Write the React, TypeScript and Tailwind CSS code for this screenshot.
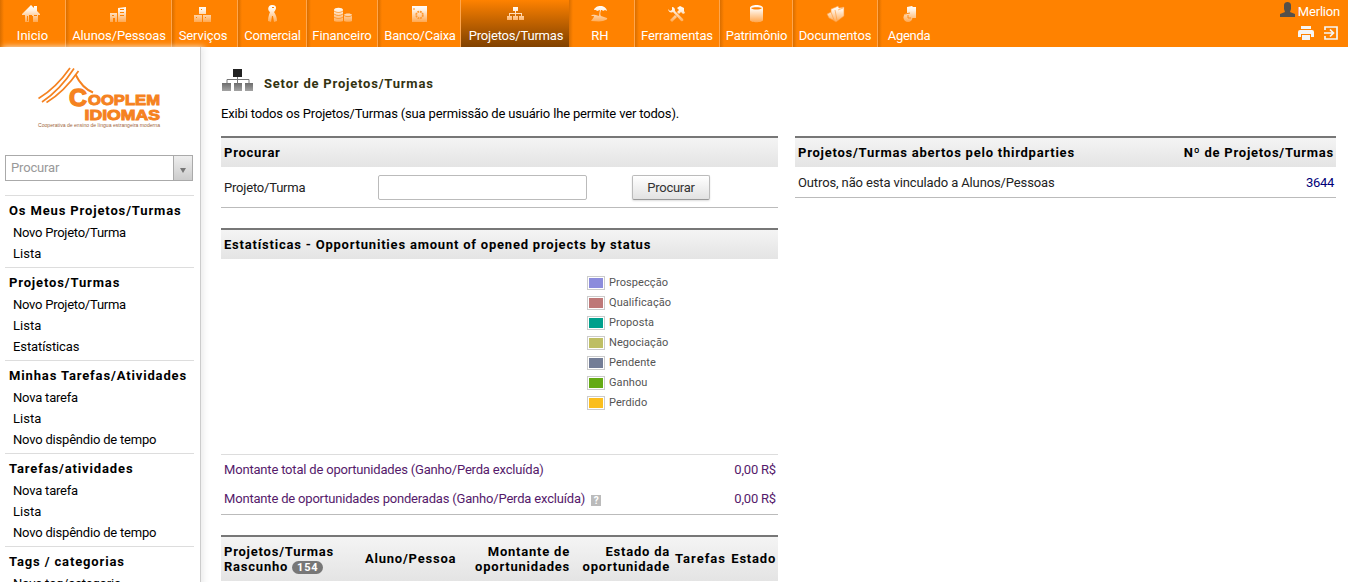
import type { ReactNode } from "react";

const FADE = "url(#fade)";

function NavGlyph({ name }: { name: string }) {
  const glyphs: Record<string, ReactNode> = {
    home: <path d="M0 9 9 0l3 3V1h3v5l3 3v1h-2v7h-5v-6h-1v-1H7v7H3V10H0zM5 11v5h1v-5zM12 10h3v1h-3z" fillRule="evenodd" />,
    building: <path d="M1 8h7v9H6v-4H4v4H1zM9 3l8-1v15H9zM11 4v1h4V4zm0 3v1h4V7zm0 3v1h4v-1zM3 10v1h2v-1z" fillRule="evenodd" />,
    boxes: <path d="M6 2h7v7H6zM1 10h8v7H1zM10 10h8v7h-8zM8 4v1h1V4zM3 12v1h1v-1zM12 12v1h1v-1z" fillRule="evenodd" />,
    person: <path d="M9 0c6 0 4 5 2 7 2 3 3 6 3 9l-3 1-1-6h-1l-1 6-3-1c0-4 1-6 2-9C4 5 5 0 9 0zm0 2v1h2V2z" fillRule="evenodd" />,
    coins: (
      <>
        <path d="M1 5c0-3 9-3 9 0v11c0 1-9 1-9 0z" />
        <path d="M11 10c0-2 8-2 8 0v6c0 1-8 1-8 0z" />
        <path d="M1 6c3 2 6 2 9 0M1 9c3 2 6 2 9 0M1 12c3 2 6 2 9 0M11 10.500c2 1.500 6 1.500 8 0" fill="none" stroke="#ff8200" strokeWidth=".7" />
      </>
    ),
    safe: (
      <>
        <path d="M2 1h15v16H2z" />
        <circle cx="9.5" cy="10" r="3.300" fill="none" stroke="#ff9830" strokeWidth="1.800" strokeDasharray="1.8 .8" />
        <path d="M3 4h2" stroke="#ff8c18" />
      </>
    ),
    tree: <path d="M7 2h5v4h-2v2h6v3h2v4h-5v-4h2V9h-5v2h2v4H7v-4h2V9H4v2h2v4H1v-4h2V8h6V6H7z" />,
    beach: <path d="M4 5c1-5 12-6 13 1l-2-1-2 1-1-1h-1c-1 3-1 5 0 6l6 2c1 2-2 2-4 3-4 1-8 0-12 0 1-2 3-3 3-5H1l1-1c4-1 6 1 7 1l1-6-3 1-1-1z" />,
    tools: <path d="M1 4c1 4 3 4 5 3l8 9c2 1 3-1 2-2L8 6c0-3-1-4-3-4v3L3 6zM10 3l3-2 4 2v3l1 2-2 1-2-2-2 2-2-2 2-2zM8 10l2 2-5 5-2-2z" />,
    cylinder: <path d="M3 3c0-4 13-4 13 0v12c0 3-13 3-13 0zm1 0c2 2 9 2 11 0-2-1-9-1-11 0z" fillRule="evenodd" />,
    folders: <path d="M1 9l4-2V4l5-2 2-1 1 2 5-1v9l-8 6-3-2-4-2zM5 7l3 8M9 5l2 10M12 5l5-2" stroke="#ff9838" strokeWidth=".6" />,
    agenda: (
      <>
        <path d="M7 2l5-1 1 1h3v11h-4L7 8z" />
        <circle cx="8" cy="12.500" r="4.500" />
        <path d="M8 10v3h3M5 9l5-1" stroke="#ff8c18" fill="none" />
      </>
    ),
  };
  return (
    <svg className="h-[18px] w-[19px] shrink-0" viewBox="0 0 19 18" fill={FADE}>
      {glyphs[name]}
    </svg>
  );
}

const nav = [
  { label: "Inicio", icon: "home", box: "w-[66px] pr-[2px]", text: "ml-[2px] tracking-[0px]" },
  { label: "Alunos/Pessoas", icon: "building", box: "w-[106px]", text: "ml-px tracking-[-0.1px]" },
  { label: "Serviços", icon: "boxes", box: "w-[66px] pr-1", text: "ml-px tracking-[-0.1px]" },
  { label: "Comercial", icon: "person", box: "w-[69px]", text: "ml-px tracking-[-0.25px]" },
  { label: "Financeiro", icon: "coins", box: "w-[71px]", text: "tracking-[-0.1px]" },
  { label: "Banco/Caixa", icon: "safe", box: "w-[83px]", text: "ml-[2px] tracking-[-0.25px]" },
  { label: "Projetos/Turmas", icon: "tree", box: "w-[108px]", text: "ml-[2px] tracking-[-0.2px]" },
  { label: "RH", icon: "beach", box: "w-[66px] pr-1", text: "ml-px tracking-[0px]" },
  { label: "Ferramentas", icon: "tools", box: "w-[85px] pr-[2px]", text: "ml-[2px] tracking-[-0.1px]" },
  { label: "Patrimônio", icon: "cylinder", box: "w-[73px]", text: "ml-px tracking-[-0.2px]" },
  { label: "Documentos", icon: "folders", box: "w-[85px]", text: "tracking-[-0.1px]" },
  { label: "Agenda", icon: "agenda", box: "w-[62px]", text: "tracking-[-0.3px]" },
];

function TopBar() {
  return (
    <header className="flex h-[47px] shrink-0 justify-between bg-[#ff8200] text-white">
      <nav className="flex">
        {nav.map((n, i) => (
          <a
            key={n.label}
            className={`flex h-[47px] shrink-0 flex-col items-center whitespace-nowrap pt-[5px] ${n.box} ${
              n.label === "Projetos/Turmas"
                ? "bg-gradient-to-b from-[#ff8200] to-[#804100]"
                : i === 11
                  ? "bg-[linear-gradient(to_right,#d96e00,#ff8200_4px)]"
                  : "border-r border-[#ffa64d] bg-[linear-gradient(to_right,#d96e00,#ff8200_4px)]"
            }`}
          >
            <NavGlyph name={n.icon} />
            <span className={`mt-[5px] leading-[15px] ${n.text}`}>{n.label}</span>
          </a>
        ))}
      </nav>
      <div className="flex flex-col items-end pr-[8px] pt-[2px]">
        <div className="flex h-[19px] items-center gap-[3px]">
          <svg className="-mt-[3px] h-4 w-[15px]" viewBox="0 0 15 16">
            <path d="M4 3c0-4 7-4 7 0v4l-1 3 5 2v3H0v-3l5-2-1-3z" fill="#55504a" />
          </svg>
          <span className="tracking-[-0.2px]">Merlion</span>
        </div>
        <div className="mr-[2px] mt-[5px] flex items-center gap-[10px]">
          <svg className="h-[14px] w-4" viewBox="0 0 16 14" fill="#f5f5f5">
            <path d="M3 0h10v3H3zM2 4h12q2 0 2 2v5h-3V8H3v3H0V6q0-2 2-2zM4 9h8v5H4z" />
          </svg>
          <svg className="h-[14px] w-[14px]" viewBox="0 0 14 14" fill="none" stroke="#f5f5f5" strokeWidth="1.7">
            <path d="M1 4V1h12v12H1v-3M0 7h9M6 3.500 9.500 7 6 10.500" />
          </svg>
        </div>
      </div>
    </header>
  );
}

function Logo() {
  return (
    <svg className="ml-[37px] h-[64px] w-[125px]" viewBox="0 0 125 64">
      <g fill="none" stroke="#f58220" strokeWidth="1.700">
        <path d="M1.500 33.500Q19 23 33 3" />
        <path d="M5 37Q23 25 37 3.500" />
        <path d="M9.500 37.500Q27 27 41.500 6" />
        <path d="M38.500 9.500Q45 23 56 27.500" strokeWidth="2" />
      </g>
      <g fill="#f58220" stroke="#f58220" className="font-['Liberation_Sans'] font-bold">
        <text x="32" y="41" fontSize="23.500" strokeWidth="1.300" textLength="18" lengthAdjust="spacingAndGlyphs">C</text>
        <text x="51" y="40" fontSize="15.500" strokeWidth="1" textLength="72" lengthAdjust="spacingAndGlyphs">OOPLEM</text>
        <text x="47.500" y="54.500" fontSize="15.500" strokeWidth="1" textLength="75.500" lengthAdjust="spacingAndGlyphs">IDIOMAS</text>
      </g>
      <text x="1" y="61.500" fontSize="5.500" fill="#a0663c" textLength="122" lengthAdjust="spacingAndGlyphs" className="font-['Liberation_Sans']">
        Cooperativa de ensino de língua estrangeira moderna
      </text>
    </svg>
  );
}

const menu = [
  { title: "Os Meus Projetos/Turmas", items: ["Novo Projeto/Turma", "Lista"] },
  { title: "Projetos/Turmas", items: ["Novo Projeto/Turma", "Lista", "Estatísticas"] },
  { title: "Minhas Tarefas/Atividades", items: ["Nova tarefa", "Lista", "Novo dispêndio de tempo"] },
  { title: "Tarefas/atividades", items: ["Nova tarefa", "Lista", "Novo dispêndio de tempo"] },
  { title: "Tags / categorias", items: ["Nova tag/categoria"] },
];

const itemTracking: Record<string, string> = {
  "Novo Projeto/Turma": "tracking-[-0.25px]",
  Lista: "tracking-[0.05px]",
  Estatísticas: "tracking-[-0.1px]",
};

function Sidebar() {
  return (
    <aside className="w-[201px] shrink-0 border-r border-[#ccc] pt-[18px] shadow-[3px_0_6px_#eee]">
      <Logo />
      <div className="ml-[5px] mt-[26px] flex h-[26px] w-[188px] border border-[#aaa] text-[#999]">
        <div className="flex-1 pl-[5px] leading-[24px] tracking-[-0.15px]">Procurar</div>
        <div className="flex w-[19px] items-center justify-center border-l border-[#aaa] bg-gradient-to-b from-[#eee] to-[#ccc]">
          <svg className="mt-1 h-[5px] w-[6px]" viewBox="0 0 6 5">
            <path d="M0 0h6L3 5z" fill="#777" />
          </svg>
        </div>
      </div>
      <div className="ml-[5px] mt-[14px] w-[189px]">
        {menu.map((m) => (
          <div key={m.title} className="whitespace-nowrap border-t border-[#ddd] pb-[3px] pt-[3px]">
            <div className="h-[23px] pl-1 font-bold leading-[23px] tracking-[0.86px]">{m.title}</div>
            {m.items.map((t) => (
              <div key={t} className={`h-[21px] pl-2 leading-[21px] ${itemTracking[t] ?? "tracking-[-0.2px]"}`}>{t}</div>
            ))}
          </div>
        ))}
      </div>
    </aside>
  );
}

const head = "border-t-2 border-[#777] bg-gradient-to-b from-[#f4f4f4] to-[#e4e4e4] font-bold whitespace-nowrap";

const legend = [
  ["Prospecção", "bg-[#8c8cdc]"],
  ["Qualificação", "bg-[#be7878]"],
  ["Proposta", "bg-[#00a08c]"],
  ["Negociação", "bg-[#bebe64]"],
  ["Pendente", "bg-[#737d96]"],
  ["Ganhou", "bg-[#64aa14]"],
  ["Perdido", "bg-[#fabe1e]"],
];

function Main() {
  return (
    <main className="flex-1 pl-5 pr-3 pt-5">
      <div className="flex h-[32px] items-center">
        <svg className="ml-px mt-[-6px] h-[23px] w-[32px]" viewBox="0 0 32 23">
          <defs>
            <linearGradient id="gray" x1="0" y1="13" x2="0" y2="23" gradientUnits="userSpaceOnUse">
              <stop stopColor="#666" />
              <stop offset="1" stopColor="#aaa" />
            </linearGradient>
          </defs>
          <path d="M11 0h9v8h-9z" fill="#222" />
          <path d="M15.500 8v6M5 14v-3.500h22V14" fill="none" stroke="#777" />
          <path d="M0 14h9v8H0zM12 14h8v8h-8zM23 14h8v8h-8z" fill="url(#gray)" />
        </svg>
        <h1 className="ml-[10px] mt-[2px] font-bold tracking-[0.8px] text-[#333311]">Setor de Projetos/Turmas</h1>
      </div>
      <p className="mt-[6px] h-[31px] leading-[17px] tracking-[-0.165px]">
        Exibi todos os Projetos/Turmas (sua permissão de usuário lhe permite ver todos).
      </p>
      <div className="flex items-start justify-between">
        <div className="w-[557px]">
          <section className="border-b border-[#bbb]">
            <div className={`h-[31px] pl-[3px] leading-[30px] tracking-[0.75px] ${head}`}>Procurar</div>
            <div className="flex h-[40px] items-center pl-[3px]">
              <span className="mt-[2px] w-[154px] tracking-[-0.2px] text-[#222]">Projeto/Turma</span>
              <span className="h-[25px] w-[209px] rounded-[2px] border border-[#bbb]" />
              <button className="ml-[45px] h-[25px] w-[78px] rounded-[2px] border border-[#bbb] border-b-[#999] bg-gradient-to-b from-white to-[#e2e2e2] pt-px tracking-[-0.25px] text-[#333] shadow-[0_1px_2px_#ddd]">
                Procurar
              </button>
            </div>
          </section>
          <section className="mt-[20px] border-b border-[#bbb]">
            <div className={`h-[31px] pl-[3px] leading-[30px] tracking-[0.79px] ${head}`}>
              Estatísticas - Opportunities amount of opened projects by status
            </div>
            <div className="h-[195px] pl-[366px] pt-[13px] text-[11px] text-[#545454]">
              {legend.map(([label, color]) => (
                <div key={label} className="flex h-[20px] items-center">
                  <span className="mt-px h-[14px] w-[18px] border border-[#ccc] p-px">
                    <span className={`block h-full w-full ${color}`} />
                  </span>
                  <span className="ml-1 mt-[2px] tracking-[0.08px]">{label}</span>
                </div>
              ))}
            </div>
            <div className="border-t border-[#ddd] pl-[3px] pr-[2px] tracking-[-0.185px] text-[#551a6b]">
              <div className="flex h-[29px] items-center justify-between">
                <span>Montante total de oportunidades (Ganho/Perda excluída)</span>
                <span>0,00 R$</span>
              </div>
              <div className="flex h-[30px] items-center justify-between">
                <span className="flex items-center">
                  <span>Montante de oportunidades ponderadas (Ganho/Perda excluída)</span>
                  <span className="ml-[6px] mt-[2px] flex h-[11px] w-[10px] items-center justify-center bg-[#bbb] text-[10px] font-bold text-white">?</span>
                </span>
                <span>0,00 R$</span>
              </div>
            </div>
          </section>
          <section className="mt-[20px]">
            <div className={`flex h-[46px] items-center leading-[15px] tracking-[0.78px] ${head}`}>
              <div className="w-[141px] pl-[3px]">
                Projetos/Turmas
                <br />
                Rascunho{" "}
                <span className="inline-block h-[13px] w-[31px] rounded-full bg-[#777] text-center text-[11px] leading-[13px] text-white">154</span>
              </div>
              <div className="-mt-[2px] w-[98px] pl-[3px]">Aluno/Pessoa</div>
              <div className="w-[110px] text-right">Montante de<br />oportunidades</div>
              <div className="w-[100px] text-right">Estado da<br />oportunidade</div>
              <div className="-mt-[2px] w-[56px] text-right tracking-[1px]">Tarefas</div>
              <div className="-mt-[2px] w-[50px] text-right">Estado</div>
            </div>
          </section>
        </div>
        <section className="w-[541px] border-b border-[#bbb]">
          <div className={`flex h-[31px] justify-between pl-[3px] pr-[2px] leading-[30px] tracking-[0.76px] ${head}`}>
            <span>Projetos/Turmas abertos pelo thirdparties</span>
            <span>Nº de Projetos/Turmas</span>
          </div>
          <div className="flex h-[30px] items-center justify-between pl-[3px] pr-[2px] pt-[2px] text-[#222]">
            <span className="tracking-[-0.12px]">Outros, não esta vinculado a Alunos/Pessoas</span>
            <span className="tracking-[-0.3px] text-[#000078]">3644</span>
          </div>
        </section>
      </div>
    </main>
  );
}

export default function App() {
  return (
    <div className="flex h-[582px] w-[1348px] flex-col overflow-hidden bg-white font-['Roboto',sans-serif] text-[13px] text-black">
      <svg className="absolute h-0 w-0">
        <defs>
          <linearGradient id="fade" x1="0" y1="0" x2="0" y2="18" gradientUnits="userSpaceOnUse">
            <stop stopColor="#fff" />
            <stop offset=".3" stopColor="#fff0e0" />
            <stop offset="1" stopColor="#ffa245" />
          </linearGradient>
        </defs>
      </svg>
      <TopBar />
      <div className="flex flex-1">
        <Sidebar />
        <Main />
      </div>
    </div>
  );
}
